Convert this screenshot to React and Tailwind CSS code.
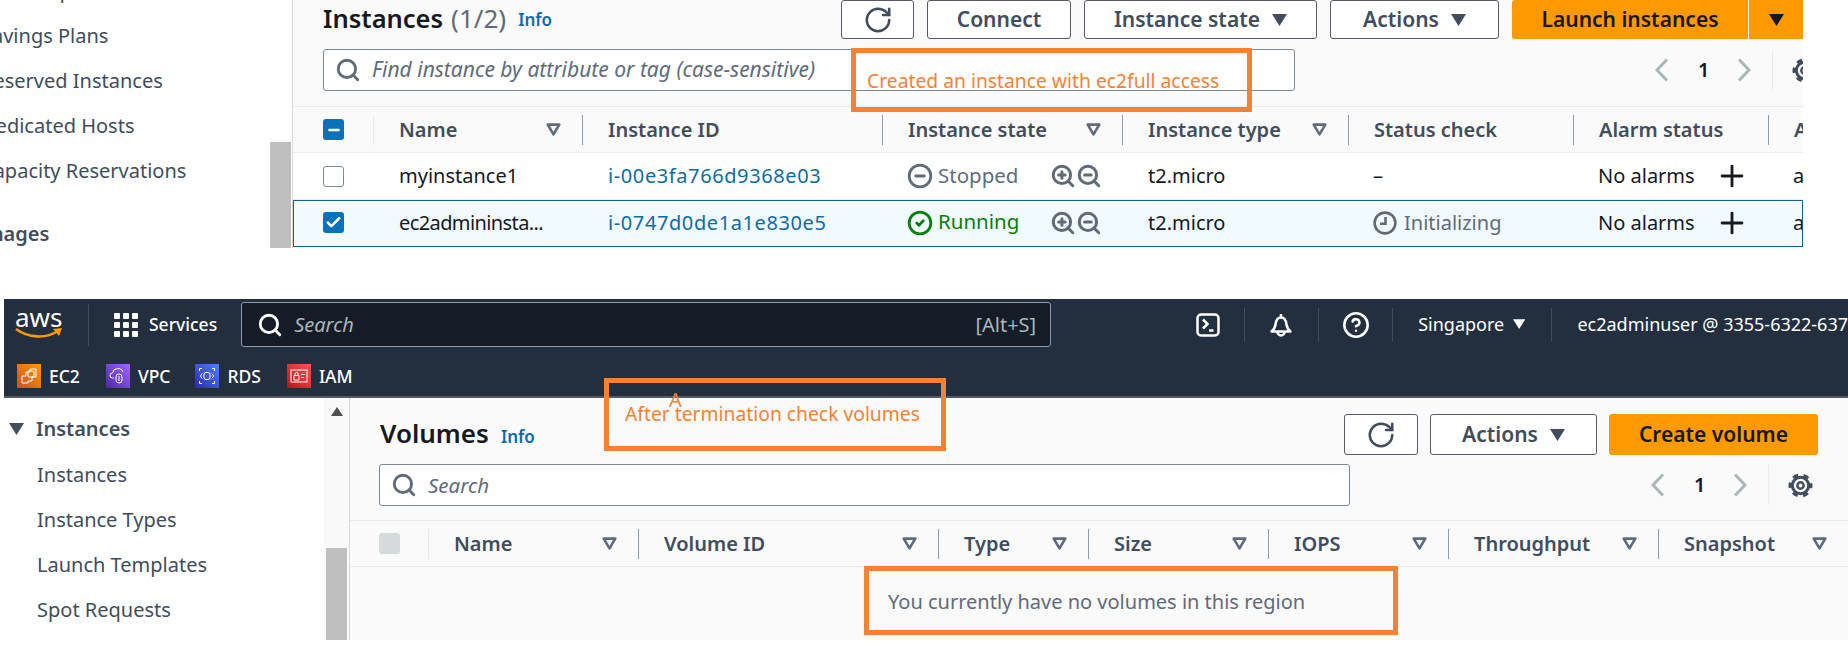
import React from 'react'
import { Search, RotateCw, Plus, ZoomIn, ZoomOut, MinusCircle, CheckCircle2, HelpCircle, Check, Minus } from 'lucide-react'

const FilterIcon = () => (
  <svg width="15" height="13" viewBox="0 0 15 13" className="shrink-0">
    <path d="M1.7 1.6h11.6L7.5 11.4z" fill="none" stroke="#5f6b7a" strokeWidth="2.6" strokeLinejoin="round" />
  </svg>
)

const Caret = ({ className = 'text-[#414d5c]', size = 15 }) => (
  <svg width={size} height={size * 0.8} viewBox="0 0 15 12" className={className}>
    <path d="M0 0h15L7.5 12z" fill="currentColor" />
  </svg>
)

const Chevron = ({ flip }) => (
  <svg width="14" height="24" viewBox="0 0 14 24" fill="none" stroke="#aab7b8" strokeWidth="3" className="shrink-0">
    <path d={flip ? 'M2 1.5 12 12 2 22.5' : 'M12 1.5 2 12l10 10.5'} />
  </svg>
)

const Gear = () => (
  <svg width="25" height="25" viewBox="0 0 25 25" fill="none" stroke="#414d5c" className="shrink-0">
    <circle cx="12.5" cy="12.5" r="8.2" strokeWidth="3" />
    <circle cx="12.5" cy="12.5" r="10.5" strokeWidth="3" strokeDasharray="5.5 5.5" strokeDashoffset="2.75" />
    <circle cx="12.5" cy="12.5" r="3.2" strokeWidth="2.4" />
  </svg>
)

const RefreshIcon = () => <RotateCw size={30} strokeWidth={2} />

const ClockIcon = () => (
  <svg width="24" height="24" viewBox="0 0 24 24" fill="none" stroke="currentColor" strokeWidth="2.6" className="shrink-0">
    <circle cx="12" cy="12" r="10.4" />
    <path d="M12.5 6v6.8H7" />
  </svg>
)

const Button = ({ className = '', children }) => (
  <div className={`flex items-center justify-center gap-3 rounded-[3px] border border-[#545b64] bg-white text-[21px] font-semibold text-[#414d5c] ${className}`}>
    {children}
  </div>
)

const HeaderCell = ({ label, filter = true, last }) => (
  <div className={`flex h-[30px] items-center justify-between pl-[25px] pr-[21px] text-[20px] font-semibold text-[#414d5c] ${last ? '' : 'border-r border-[#8d99a8]'}`}>
    <span className="whitespace-nowrap">{label}</span>
    {filter && <FilterIcon />}
  </div>
)

const CheckBox = ({ state }) => {
  if (state === 'off') return <div className="h-[21px] w-[21px] rounded-[3px] border border-[#7d8998] bg-white" />
  if (state === 'disabled') return <div className="h-[21px] w-[21px] rounded-[3px] bg-[#d5dbdb]" />
  return (
    <div className="flex h-[21px] w-[21px] items-center justify-center rounded-[3px] bg-[#0972b8]">
      {state === 'mixed' ? <Minus size={16} strokeWidth={3.5} color="white" /> : <Check size={17} strokeWidth={3.5} color="white" />}
    </div>
  )
}

const Annotation = ({ className, textClass, children }) => (
  <div className={`absolute border-[5px] border-[#f58233] ${className}`}>
    <span className={`absolute whitespace-nowrap ${textClass}`}>{children}</span>
  </div>
)

const Row = ({ selected, box, name, id, statusIcon, statusText, statusClass, check }) => (
  <div className={`grid h-[47px] grid-cols-[81px_209px_300px_240px_226px_225px_195px_1fr] items-center text-[20px] text-[#16191f] ${selected ? 'border-y border-[#0f5f8f] bg-[#f1faff] pb-[2px] outline-1 -outline-offset-1 outline-[#0f5f8f]' : 'border-b border-[#e9ebed] bg-white'}`}>
    <div className="pl-[30px]"><CheckBox state={box} /></div>
    <div className={`whitespace-nowrap pl-[25px] ${selected ? 'tracking-[-0.6px]' : ''}`}>{name}</div>
    <div className="pl-[25px] tracking-[0.6px] text-[#0f6aa8]">{id}</div>
    <div className="flex items-center pl-6">
      {statusIcon}
      <span className={`-mt-[2px] ml-[5px] w-[112px] text-[20.5px] ${statusClass}`}>{statusText}</span>
      <ZoomIn size={26} color="#5f6b7a" strokeWidth={2.8} />
      <ZoomOut size={26} color="#5f6b7a" strokeWidth={2.8} />
    </div>
    <div className="pl-[25px]">t2.micro</div>
    <div className={`flex items-center pl-6 ${check ? 'text-[#5f6b7a]' : ''}`}>{check ? <><ClockIcon /><span className="ml-[7px]">{check}</span></> : '–'}</div>
    <div className="flex items-center pl-6">
      <span className="w-[117px]">No alarms</span>
      <Plus size={34} strokeWidth={2} color="#16191f" className="shrink-0" />
    </div>
    <div className="pl-6">a</div>
  </div>
)

const Pager = ({ className }) => (
  <div className={`flex h-[42px] shrink-0 items-center ${className}`}>
    <Chevron />
    <span className="mx-[29px] w-[10px] text-[20px] font-semibold text-[#16191f]">1</span>
    <Chevron flip />
    <div className="ml-[21px] h-[40px] border-l border-[#e9ebed]" />
    <div className="ml-[19px]"><Gear /></div>
  </div>
)

const ServiceIcon = ({ className, children }) => (
  <div className={`flex h-6 w-6 items-center justify-center bg-linear-to-tr ${className}`}>{children}</div>
)

const SideItem = ({ children, className = '' }) => (
  <div className={`flex h-[45px] items-center whitespace-nowrap ${className}`}>{children}</div>
)

const TopPanel = () => (
  <div className="relative flex h-[248px] overflow-hidden bg-white">
    <div className="w-[270px] shrink-0 overflow-hidden text-[20px] text-[#414d5c]">
      <div className="-ml-[19px] -mt-[32px] flex flex-col">
        <SideItem>Spot Requests</SideItem>
        <SideItem>Savings Plans</SideItem>
        <SideItem>Reserved Instances</SideItem>
        <SideItem>Dedicated Hosts</SideItem>
        <SideItem>Capacity Reservations</SideItem>
        <SideItem className="-ml-1 mt-[18px] font-semibold">Images</SideItem>
      </div>
    </div>
    <div className="flex w-[23px] shrink-0 flex-col justify-end border-r border-[#d5dbdb]">
      <div className="mr-[1px] h-[106px] bg-[#bfbfbf]" />
    </div>
    <div className="w-[1510px] shrink-0 overflow-hidden bg-[#fafafa]">
      <div className="flex h-[39px] items-center pl-[30px]">
        <span className="-mt-[3px] text-[25.5px] font-semibold text-[#16191f]">Instances</span>
        <span className="-mt-[3px] ml-2 text-[26px] text-[#5f6b7a]">(1/2)</span>
        <span className="ml-3 text-[17px] font-semibold text-[#0f6aa8]">Info</span>
        <div className="ml-auto flex h-[39px] gap-[13px]">
          <Button className="w-[73px]"><RefreshIcon /></Button>
          <Button className="w-[144px]">Connect</Button>
          <Button className="w-[233px]">Instance state <Caret /></Button>
          <Button className="w-[169px]">Actions <Caret /></Button>
          <div className="flex gap-px">
            <div className="flex w-[236px] items-center justify-center rounded-l-[3px] bg-[#ff9900] text-[21px] font-semibold text-[#16191f]">Launch instances</div>
            <div className="flex w-[54px] items-center justify-center bg-[#ff9900]"><Caret className="text-[#16191f]" /></div>
          </div>
        </div>
      </div>
      <div className="flex h-[68px] items-start border-b border-[#e9ebed] pl-[30px] pt-[10px]">
        <div className="flex h-[42px] w-[972px] shrink-0 items-center rounded-[3px] border border-[#7d8998] bg-white pl-[11px] text-[21px] italic text-[#5f6b7a]">
          <Search size={26} strokeWidth={2.6} className="mr-[11px] shrink-0" />
          Find instance by attribute or tag (case-sensitive)
        </div>
        <Pager className="ml-[360px]" />
      </div>
      <div className="grid h-[46px] grid-cols-[81px_209px_300px_240px_226px_225px_195px_1fr] items-center border-b border-[#e9ebed]">
        <div className="flex h-[30px] items-center border-r border-[#e9ebed] pl-[30px]"><CheckBox state="mixed" /></div>
        <HeaderCell label="Name" />
        <HeaderCell label="Instance ID" filter={false} />
        <HeaderCell label="Instance state" />
        <HeaderCell label="Instance type" />
        <HeaderCell label="Status check" filter={false} />
        <HeaderCell label="Alarm status" filter={false} />
        <HeaderCell label="A" filter={false} last />
      </div>
      <Row box="off" name="myinstance1" id="i-00e3fa766d9368e03" statusIcon={<MinusCircle size={26} strokeWidth={2.6} color="#5f6b7a" className="shrink-0" />} statusText="Stopped" statusClass="text-[#5f6b7a]" />
      <Row selected box="on" name="ec2admininsta..." id="i-0747d0de1a1e830e5" statusIcon={<CheckCircle2 size={26} strokeWidth={2.6} color="#037f0c" className="shrink-0" />} statusText="Running" statusClass="text-[#037f0c]" check="Initializing" />
    </div>
    <Annotation className="left-[851px] top-[48px] h-[64px] w-[401px]" textClass="left-[11px] top-[14px] text-[19.3px] text-[#f58233]">Created an instance with ec2full access</Annotation>
  </div>
)

const NavSep = ({ className = '' }) => <div className={`h-[34px] border-l border-[#414d5c] ${className}`} />

const GridIcon = () => (
  <svg width="24" height="24" viewBox="0 0 24 24" fill="white" className="ml-[25px] shrink-0">
    {[0, 9, 18].map(y => [0, 9, 18].map(x => <rect key={`${x}-${y}`} x={x} y={y} width="6" height="6" rx="1" />))}
  </svg>
)

const TerminalIcon = () => (
  <svg width="24" height="24" viewBox="0 0 24 24" fill="none" stroke="white" strokeWidth="2.5" className="ml-[145px] shrink-0">
    <rect x="1.5" y="1.5" width="21" height="21" rx="3.5" />
    <path d="M7 6.5 11.5 11 7 15.5M13 17.5h4.5" />
  </svg>
)

const BellIcon = () => (
  <svg width="24" height="24" viewBox="0 0 24 24" fill="none" stroke="white" strokeWidth="2.5" className="ml-6 shrink-0">
    <path d="M2.5 18.5h19c-2.5-2-3.5-3.5-4-7-.5-4-2.5-7-5.500-7s-5 3-5.500 7c-.5 3.500-1.500 5-4 7z" strokeLinejoin="round" />
    <path d="M12 1v3M8.500 19a3.500 3.500 0 0 0 7 0" />
  </svg>
)

const BottomPanel = () => (
  <div className="relative mt-[51px]">
    <div className="ml-1 bg-[#232f3e] text-white">
      <div className="flex h-[51px] items-center">
        <div className="flex h-[42px] w-[85px] shrink-0 flex-col items-start justify-center border-r border-[#414d5c] pl-[11px]">
          <span className="-mt-1 text-[26px] leading-[20px]">aws</span>
          <svg width="48" height="12" viewBox="0 0 48 12"><path d="M1 2c12 9 30 10 42 2" stroke="#ff9900" strokeWidth="2.6" fill="none" /><path d="M38 2l9-1-3 8z" fill="#ff9900" /></svg>
        </div>
        <GridIcon />
        <span className="ml-[11px] text-[17.5px] font-medium">Services</span>
        <div className="ml-[24px] flex h-[45px] w-[810px] shrink-0 items-center rounded-[3px] border border-[#8d99a8] bg-[#161c27] pl-[15px] pr-[14px] text-[20px]">
          <Search size={26} strokeWidth={2.6} color="white" className="shrink-0" />
          <span className="ml-[11px] italic text-[#aab7b8]">Search</span>
          <span className="ml-auto text-[#aab7b8]">[Alt+S]</span>
        </div>
        <TerminalIcon />
        <NavSep className="ml-6" />
        <BellIcon />
        <NavSep className="ml-[25px]" />
        <HelpCircle size={28} strokeWidth={2.2} className="ml-[23px] shrink-0" />
        <NavSep className="ml-[22px]" />
        <span className="ml-[25px] text-[18px]">Singapore</span>
        <Caret className="ml-[9px] text-white" size={13} />
        <NavSep className="ml-[26px]" />
        <span className="ml-[25px] whitespace-nowrap text-[18px]">ec2adminuser @ 3355-6322-637</span>
      </div>
      <div className="flex h-[48px] items-center border-b-2 border-[#545b64] pl-[13px] pt-[6px] text-[17.5px] font-medium">
        <ServiceIcon className="from-[#c8511b] to-[#ff9900]">
          <svg width="18" height="18" viewBox="0 0 18 18" fill="none" stroke="white" strokeWidth="1"><path d="M2 9h4v-4h4v-3h6v8h-4v4H8v2H2z" /><rect x="8" y="4" width="6" height="6" rx="1" /></svg>
        </ServiceIcon>
        <span className="ml-2">EC2</span>
        <ServiceIcon className="ml-[26px] from-[#4d27a8] to-[#a166ff]">
          <svg width="18" height="18" viewBox="0 0 18 18" fill="none" stroke="white" strokeWidth="1"><path d="M5 11H3.500a2.500 2.500 0 0 1 0-5 5.500 5.500 0 0 1 10.500-1" /><rect x="7" y="7" width="6" height="9" rx="3" /><path d="M10 9v5" /></svg>
        </ServiceIcon>
        <span className="ml-2">VPC</span>
        <ServiceIcon className="ml-[25px] from-[#2e27ad] to-[#527fff]">
          <svg width="18" height="18" viewBox="0 0 18 18" fill="none" stroke="white" strokeWidth="1"><rect x="6" y="5.500" width="6" height="7" rx="2" /><path d="M1.500 4V1.500H4M16.500 4V1.500H14M1.500 14v2.500H4M16.500 14v2.500H14M4 6.500 2.500 9 4 11.500M14 6.500 15.500 9 14 11.500" /></svg>
        </ServiceIcon>
        <span className="ml-2">RDS</span>
        <ServiceIcon className="ml-[26px] from-[#bd0816] to-[#ff5252]">
          <svg width="18" height="14" viewBox="0 0 18 14" fill="none" stroke="white" strokeWidth="1"><rect x="1" y="1" width="16" height="12" /><path d="M4 6.500h5V11H4zM5 6.500V5a1.500 1.500 0 0 1 3 0v1.500M11 5.500h4M11 8.500h3" /></svg>
        </ServiceIcon>
        <span className="ml-2">IAM</span>
      </div>
    </div>
    <div className="flex h-[242px] overflow-hidden bg-white">
      <div className="w-[324px] shrink-0 pl-[9px] pt-[16px] text-[20px] text-[#414d5c]">
        <div className="flex h-[30px] items-center font-semibold"><Caret size={15} /><span className="ml-3">Instances</span></div>
        <SideItem className="pl-7 pt-[16px]">Instances</SideItem>
        <SideItem className="pl-7 pt-[16px]">Instance Types</SideItem>
        <SideItem className="pl-7 pt-[16px]">Launch Templates</SideItem>
        <SideItem className="pl-7 pt-[16px]">Spot Requests</SideItem>
      </div>
      <div className="flex w-[26px] shrink-0 flex-col items-center justify-between border-r border-[#d5dbdb] bg-[#f9f9f9]">
        <div className="mt-[9px] h-0 w-0 border-x-[6px] border-b-[9px] border-x-transparent border-b-[#505050]" />
        <div className="h-[92px] w-[21px] bg-[#bfbfbf]" />
      </div>
      <div className="flex-1 overflow-hidden bg-[#fafafa]">
        <div className="flex h-[57px] items-end pl-[30px]">
          <span className="mb-[2px] text-[26px] font-semibold text-[#16191f]">Volumes</span>
          <span className="mb-[6px] ml-3 text-[17px] font-semibold text-[#0f6aa8]">Info</span>
          <div className="ml-auto mr-[30px] flex h-[41px] gap-3">
            <Button className="w-[74px]"><RefreshIcon /></Button>
            <Button className="w-[167px]">Actions <Caret /></Button>
            <div className="flex w-[209px] items-center justify-center rounded-[3px] bg-[#ff9900] text-[21px] font-semibold text-[#16191f]">Create volume</div>
          </div>
        </div>
        <div className="flex h-[66px] items-start border-b border-[#e9ebed] pl-[29px] pt-[9px]">
          <div className="flex h-[42px] w-[971px] shrink-0 items-center rounded-[3px] border border-[#7d8998] bg-white pl-[11px] text-[20.5px] italic text-[#5f6b7a]">
            <Search size={26} strokeWidth={2.6} className="mr-[11px] shrink-0" />
            Search
          </div>
          <Pager className="ml-[301px]" />
        </div>
        <div className="grid h-[46px] grid-cols-[79px_210px_300px_150px_180px_180px_210px_1fr] items-center border-b border-[#e9ebed]">
          <div className="flex h-[30px] items-center border-r border-[#e9ebed] pl-[29px]"><CheckBox state="disabled" /></div>
          <HeaderCell label="Name" />
          <HeaderCell label="Volume ID" />
          <HeaderCell label="Type" />
          <HeaderCell label="Size" />
          <HeaderCell label="IOPS" />
          <HeaderCell label="Throughput" />
          <HeaderCell label="Snapshot" last />
        </div>
      </div>
    </div>
    <Annotation className="left-[604px] top-[79px] h-[73px] w-[342px]" textClass="left-[16px] top-[17px] text-[19.3px] text-[#f58233]">After termination check volumes</Annotation>
    <Annotation className="left-[864px] top-[267px] h-[69px] w-[534px]" textClass="left-[19px] top-[16px] text-[20px] text-[#5f6b7a]">You currently have no volumes in this region</Annotation>
    <span className="absolute left-[669px] top-[86px] text-[20px] text-[#f58233]">A</span>
  </div>
)

export default function App() {
  return (
    <div className="h-[648px] w-[1848px] overflow-hidden bg-white font-['Noto_Sans',sans-serif]">
      <TopPanel />
      <BottomPanel />
    </div>
  )
}
